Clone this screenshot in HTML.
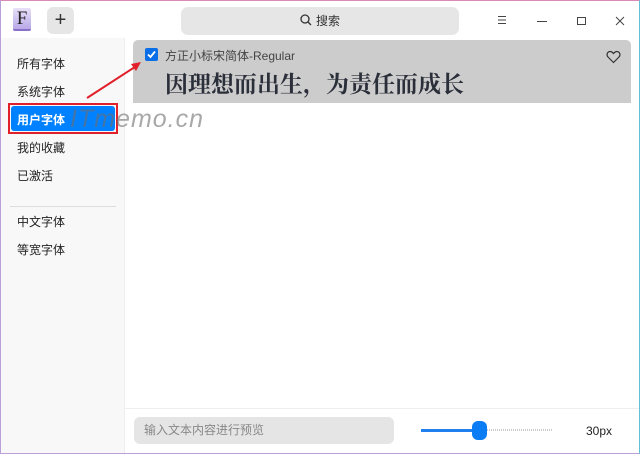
<!DOCTYPE html>
<html><head><meta charset="utf-8"><style>
*{margin:0;padding:0;box-sizing:border-box}
body{width:640px;height:454px;overflow:hidden;background:#fff;font-family:"Liberation Sans","Noto Sans CJK SC",sans-serif;position:relative}
.frame{position:absolute;inset:0;border:1px solid #b9a0d8;border-top-color:#d88ab8;border-right-color:#60c0d8}
.abs{position:absolute}
.side{left:1px;top:38px;width:124px;height:415px;background:#f8f8f8;border-right:1px solid #eee}
.it{position:absolute;left:17px;font-size:12px;color:#222}
</style></head><body>
<div class="frame"></div>
<div class="abs" style="left:13px;top:8px;width:18px;height:23px;background:linear-gradient(#e8e0f8,#b8a8e8);border-radius:2px;border-bottom:2px solid #8870c8;font-family:'Liberation Serif',serif;font-size:19px;text-align:center;line-height:22px;color:#222">F</div>
<div class="abs" style="left:47px;top:7px;width:27px;height:27px;background:#e6e6e6;border-radius:6px;text-align:center;line-height:26px;font-size:20px;color:#333">+</div>
<div class="abs" style="left:181px;top:7px;width:278px;height:28px;background:#e6e6e6;border-radius:7px;font-size:12px;color:#333;text-align:center;line-height:28px">
<svg width="12" height="12" viewBox="0 0 12 12" style="vertical-align:-1px;margin-right:4px"><circle cx="5" cy="5" r="4" fill="none" stroke="#333" stroke-width="1.3"/><path d="M8 8L11 11" stroke="#333" stroke-width="1.3"/></svg>搜索</div>
<svg class="abs" style="left:497px;top:15px" width="10" height="10"><path d="M1 1.5H9M1 5H9M1 8.5H9" stroke="#444" stroke-width="1"/></svg>
<div class="abs" style="left:537px;top:21px;width:10px;height:1px;background:#444"></div>
<div class="abs" style="left:577px;top:17px;width:9px;height:8px;border:1px solid #444"></div>
<svg class="abs" style="left:615px;top:16px" width="10" height="10"><path d="M1 1L9 9M9 1L1 9" stroke="#444" stroke-width="1"/></svg>
<div class="abs side"></div>
<div class="it" style="top:55px">所有字体</div>
<div class="it" style="top:83px">系统字体</div>
<div class="abs" style="left:8px;top:103px;width:110px;height:31px;border:2px solid #e0202a"></div>
<div class="abs" style="left:11px;top:106px;width:104px;height:25px;background:#0081ff;border-radius:3px"></div>
<div class="it" style="top:111px;color:#fff;font-weight:bold">用户字体</div>
<div class="it" style="top:139px">我的收藏</div>
<div class="it" style="top:167px">已激活</div>
<div class="abs" style="left:10px;top:206px;width:106px;height:1px;background:#ddd"></div>
<div class="it" style="top:213px">中文字体</div>
<div class="it" style="top:241px">等宽字体</div>
<div class="abs" style="left:133px;top:40px;width:498px;height:63px;background:#cccccc;border-radius:5px 5px 0 0"></div>
<div class="abs" style="left:145px;top:48px;width:13px;height:13px;background:#0a6ee8;border-radius:2px"></div>
<svg class="abs" style="left:145px;top:48px" width="13" height="13"><path d="M3 6.5L5.5 9L10 3.5" stroke="#fff" stroke-width="1.8" fill="none"/></svg>
<div class="abs" style="left:165px;top:47px;font-size:12px;color:#444">方正小标宋简体-Regular</div>
<div class="abs" style="left:165px;top:67px;font-size:23px;font-weight:bold;color:#2b2f3a;font-family:'Noto Serif CJK SC',serif;line-height:32px;white-space:nowrap">因理想而出生，为责任而成长</div>
<svg class="abs" style="left:606px;top:50px" width="15" height="14" viewBox="0 0 15 14"><path d="M7.5 12.5L2 7C0.5 5.5 0.8 2.5 3 1.7 5 1 6.6 2.3 7.5 3.5 8.4 2.3 10 1 12 1.7 14.2 2.5 14.5 5.5 13 7Z" fill="none" stroke="#333" stroke-width="1.2"/></svg>
<svg class="abs" style="left:0;top:0" width="640" height="454"><path d="M87 98L138 65" stroke="#e0202a" stroke-width="2"/><path d="M141 62L131 64L136 71Z" fill="#e0202a"/></svg>
<div class="abs" style="left:70px;top:105px;font-size:25px;font-style:italic;color:rgba(110,110,110,0.6);font-family:'Liberation Sans',sans-serif;letter-spacing:1px;white-space:nowrap">ITmemo.cn</div>
<div class="abs" style="left:125px;top:408px;width:514px;height:1px;background:#eee"></div>
<div class="abs" style="left:134px;top:417px;width:260px;height:27px;background:#e5e5e5;border-radius:6px;font-size:12px;color:#888;line-height:27px;padding-left:10px">输入文本内容进行预览</div>
<div class="abs" style="left:421px;top:429px;width:132px;height:2px;background:repeating-linear-gradient(90deg,#ccc 0 1px,transparent 1px 2px)"></div>
<div class="abs" style="left:421px;top:429px;width:56px;height:3px;background:#1f80ee"></div>
<div class="abs" style="left:472px;top:421px;width:15px;height:19px;background:#0a7df5;border-radius:6px"></div>
<div class="abs" style="left:586px;top:424px;font-size:12px;color:#222">30px</div>
</body></html>
